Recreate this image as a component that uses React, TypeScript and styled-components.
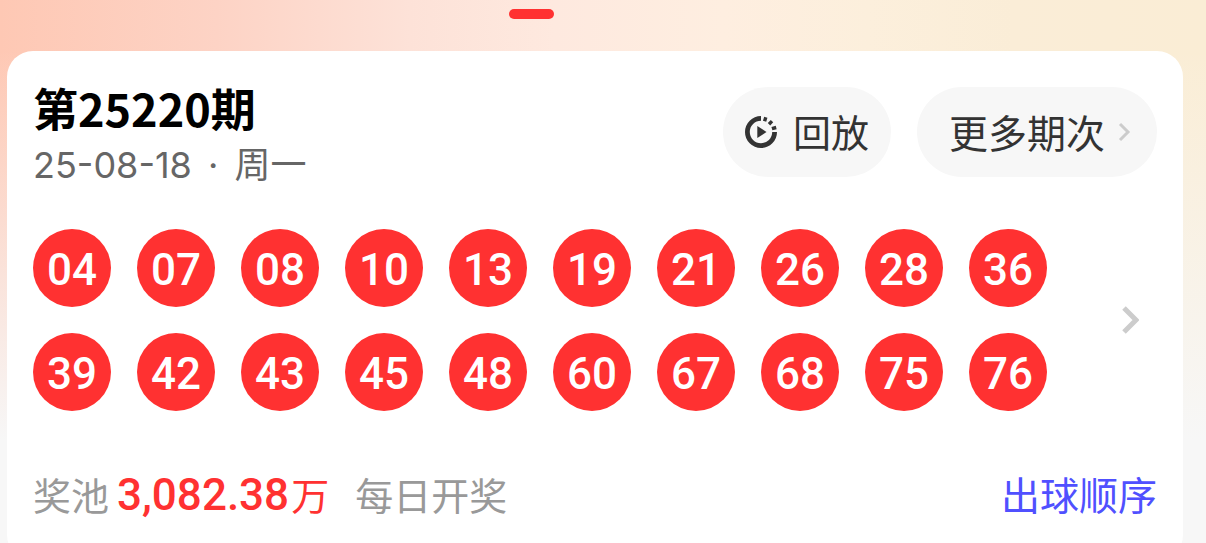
import React from "react";
import styled, { createGlobalStyle } from "styled-components";

const cjk = `"Noto Sans CJK SC", sans-serif`;

const GlobalStyle = createGlobalStyle`
  *, *::before, *::after { box-sizing: border-box; }
  html { scrollbar-width: none; background: #f7f7f7; }
  body { margin: 0; font-family: ${cjk}; }
  h2, p, ol { margin: 0; padding: 0; }
  button { border: 0; padding: 0; background: none; font: inherit; cursor: pointer; }
`;

const Page = styled.div`
  padding-bottom: 24px;
  background:
    linear-gradient(to bottom, rgba(247, 247, 247, 0) 50px, rgba(247, 247, 247, 0.4) 210px, #f7f7f7 440px),
    linear-gradient(to right, #fec8b4 0%, #fdd3c5 18%, #fde2d8 34%, #fee9df 46%, #feeee0 60%, #fcefdc 72%, #faedd7 84%, #faedd5 100%);
`;

const TabStrip = styled.div`
  display: flex;
  justify-content: center;
  padding: 9px 143px 32px 0;
`;

const TabIndicator = styled.span`
  width: 45px;
  height: 10px;
  border-radius: 5px;
  background: #ff3131;
`;

const Card = styled.article`
  margin: 0 23px 0 7px;
  padding: 36px 26px 38px;
  border-radius: 26px;
  background: #fff;
`;

const Header = styled.header`
  display: flex;
  align-items: flex-start;
  justify-content: space-between;
`;

const Title = styled.h2`
  font-size: 45px;
  line-height: 42px;
  font-weight: 700;
  color: #000;
`;

const DateLine = styled.p`
  margin-top: 14px;
  font-family: Inter, ${cjk};
  font-size: 36px;
  line-height: 44px;
  color: #666;
`;

const Dot = styled.span`
  margin: 0 6px;
`;

const Actions = styled.div`
  display: flex;
  gap: 26px;
`;

const Pill = styled.button`
  display: flex;
  align-items: center;
  height: 90px;
  border-radius: 45px;
  background: #f7f7f7;
  line-height: 56px;
  color: #333;
  white-space: nowrap;
`;

const ReplayPill = styled(Pill)`
  gap: 16px;
  padding: 0 22px;
  font-size: 38px;
`;

const HistoryPill = styled(Pill)`
  gap: 13px;
  padding: 0 26px 0 32px;
  font-size: 39px;
`;

const PillLabel = styled.span`
  padding-bottom: 2px;
`;

const Draw = styled.section`
  display: flex;
  align-items: center;
  margin-top: 42px;
`;

const Balls = styled.ol`
  flex: 1;
  display: grid;
  grid-template-columns: repeat(auto-fill, 78px);
  gap: 26px;
  list-style: none;
`;

const Ball = styled.li`
  display: flex;
  align-items: center;
  justify-content: center;
  height: 78px;
  padding-top: 4px;
  border-radius: 50%;
  background: #ff3131;
  font-family: Roboto, ${cjk};
  font-size: 44px;
  line-height: 52px;
  font-weight: 500;
  color: #fff;
`;

const MoreButton = styled.button`
  display: flex;
  padding: 0 18px;
`;

const Footer = styled.footer`
  display: flex;
  align-items: baseline;
  justify-content: space-between;
  margin-top: 54px;
  font-size: 38px;
  line-height: 56px;
  color: #999;
`;

const Pool = styled.p`
  display: flex;
  align-items: baseline;
`;

const Amount = styled.strong`
  margin: 0 26px 0 8px;
  font-weight: 400;
  color: #ff3131;
`;

const Figure = styled.span`
  margin-right: 2px;
  font-family: Roboto, ${cjk};
  font-size: 44px;
  font-weight: 500;
`;

const OrderLink = styled.a`
  font-size: 39px;
  color: #5050ff;
  text-decoration: none;
`;

const ReplayIcon = () => (
  <svg width="32" height="32" viewBox="0 0 32 32" fill="none" stroke="#333" aria-hidden="true">
    <path d="M16 2.4A13.6 13.6 0 1 0 29.6 16" strokeWidth="4.8" />
    <path d="M19.6 5.2l1.2-3.9M24 8.2l3-3.1M26.9 12.7l4.3-1.2" strokeWidth="3.4" />
    <path d="M12.3 10v12l9.2-6z" fill="#333" stroke="none" />
  </svg>
);

const Chevron = ({ width, height, weight }: { width: number; height: number; weight: number }) => (
  <svg width={width} height={height} viewBox={`0 0 ${width} ${height}`} fill="none" stroke="#ccc" strokeWidth={weight} aria-hidden="true">
    <path d={`M2 2L${width - 3} ${height / 2}L2 ${height - 2}`} />
  </svg>
);

const numbers = [
  "04", "07", "08", "10", "13", "19", "21", "26", "28", "36",
  "39", "42", "43", "45", "48", "60", "67", "68", "75", "76",
];

export default function App() {
  return (
    <Page>
      <GlobalStyle />
      <TabStrip>
        <TabIndicator />
      </TabStrip>
      <Card>
        <Header>
          <div>
            <Title>第25220期</Title>
            <DateLine>
              25-08-18 <Dot>·</Dot> 周一
            </DateLine>
          </div>
          <Actions>
            <ReplayPill type="button">
              <ReplayIcon />
              <PillLabel>回放</PillLabel>
            </ReplayPill>
            <HistoryPill type="button">
              <PillLabel>更多期次</PillLabel>
              <Chevron width={13} height={20} weight={3} />
            </HistoryPill>
          </Actions>
        </Header>
        <Draw>
          <Balls>
            {numbers.map((n) => (
              <Ball key={n}>{n}</Ball>
            ))}
          </Balls>
          <MoreButton type="button" aria-label="查看详情">
            <Chevron width={17} height={28} weight={5} />
          </MoreButton>
        </Draw>
        <Footer>
          <Pool>
            奖池
            <Amount>
              <Figure>3,082.38</Figure>万
            </Amount>
            每日开奖
          </Pool>
          <OrderLink href="#order">出球顺序</OrderLink>
        </Footer>
      </Card>
    </Page>
  );
}
